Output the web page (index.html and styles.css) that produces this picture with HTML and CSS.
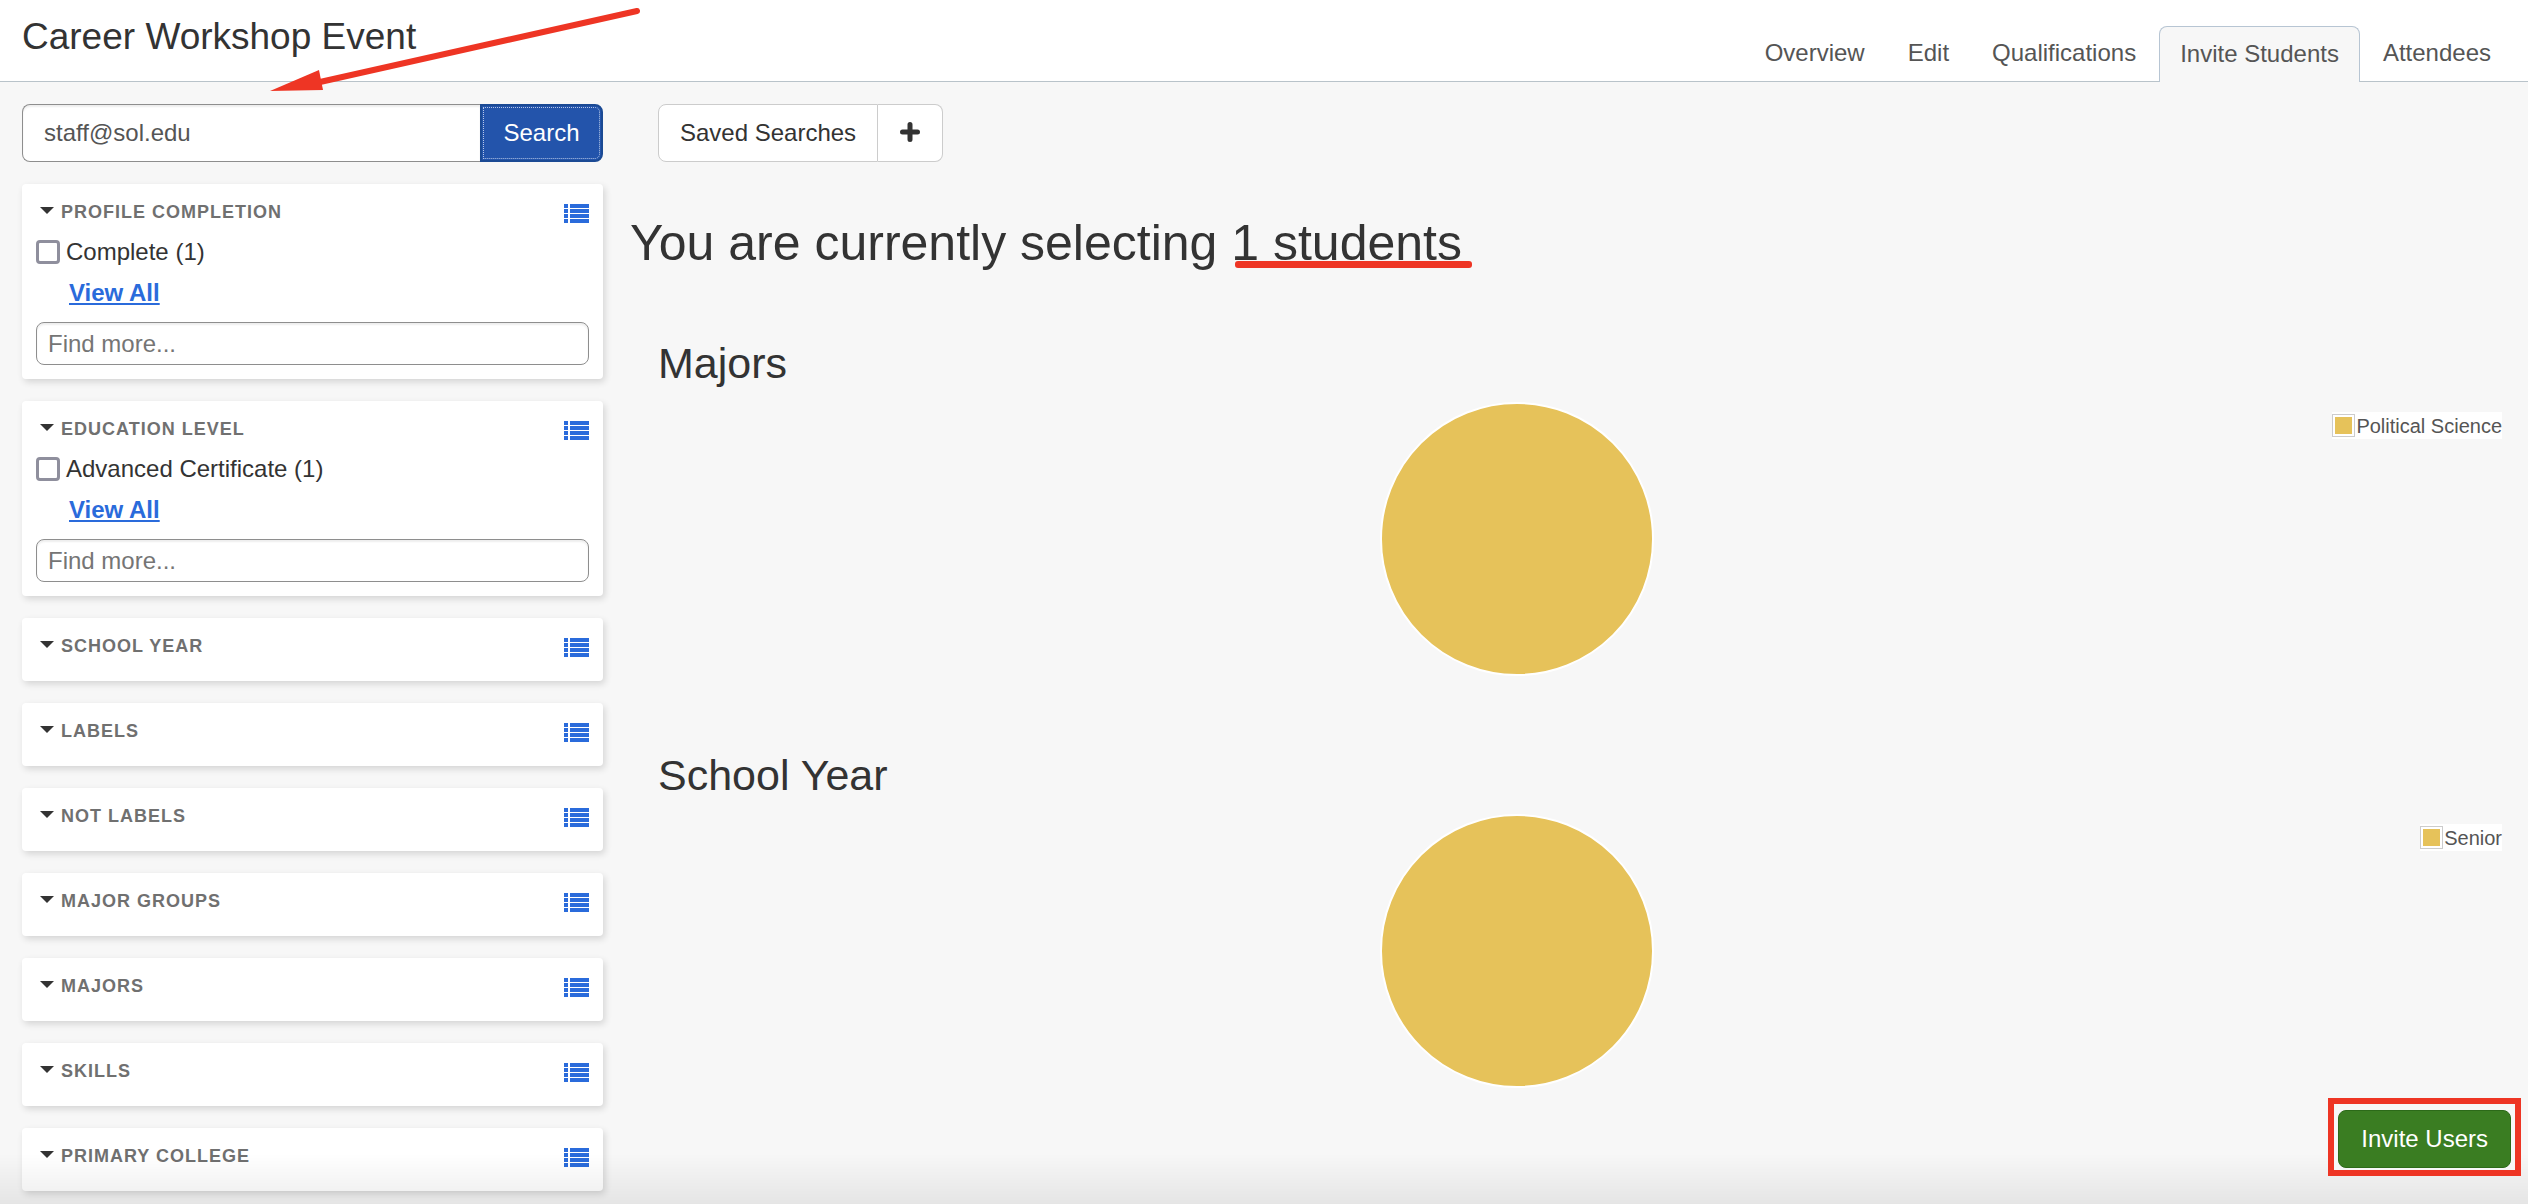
FILE: index.html
```html
<!DOCTYPE html>
<html lang="en">
<head>
<meta charset="utf-8">
<title>Career Workshop Event</title>
<link rel="stylesheet" href="styles.css">
</head>
<body>
<svg class="defs" width="0" height="0" aria-hidden="true">
  <symbol id="icon-list" viewBox="0 0 25 19">
    <path d="M0 0h4v4H0zM6 0h19v4H6zM0 5h4v4H0zM6 5h19v4H6zM0 10h4v4H0zM6 10h19v4H6zM0 15h4v4H0zM6 15h19v4H6z"/>
  </symbol>
  <symbol id="icon-caret" viewBox="0 0 14 7"><path d="M0 0h14L7 7z"/></symbol>
</svg>

<header class="page-header">
  <h1 class="page-title">Career Workshop Event</h1>
  <nav class="tabs">
    <a class="tab" href="#">Overview</a>
    <a class="tab" href="#">Edit</a>
    <a class="tab" href="#">Qualifications</a>
    <a class="tab tab-active" href="#" aria-current="page">Invite Students</a>
    <a class="tab" href="#">Attendees</a>
  </nav>
</header>

<div class="layout">
  <aside class="sidebar">
    <form class="search">
      <input class="search-input" type="text" value="staff@sol.edu" aria-label="Search students">
      <button class="search-button" type="button">Search</button>
    </form>

    <section class="card">
      <div class="card-head">
        <h2 class="card-title"><svg class="caret"><use href="#icon-caret"/></svg>Profile Completion</h2>
        <button class="list-button" type="button" aria-label="List profile completion"><svg class="list-icon"><use href="#icon-list"/></svg></button>
      </div>
      <div class="card-body">
        <label class="option"><input class="check" type="checkbox">Complete (1)</label>
        <a class="view-all" href="#">View All</a>
        <input class="find" type="text" placeholder="Find more..." aria-label="Find more profile completion">
      </div>
    </section>

    <section class="card">
      <div class="card-head">
        <h2 class="card-title"><svg class="caret"><use href="#icon-caret"/></svg>Education Level</h2>
        <button class="list-button" type="button" aria-label="List education levels"><svg class="list-icon"><use href="#icon-list"/></svg></button>
      </div>
      <div class="card-body">
        <label class="option"><input class="check" type="checkbox">Advanced Certificate (1)</label>
        <a class="view-all" href="#">View All</a>
        <input class="find" type="text" placeholder="Find more..." aria-label="Find more education levels">
      </div>
    </section>

    <section class="card">
      <div class="card-head">
        <h2 class="card-title"><svg class="caret"><use href="#icon-caret"/></svg>School Year</h2>
        <button class="list-button" type="button" aria-label="List school years"><svg class="list-icon"><use href="#icon-list"/></svg></button>
      </div>
    </section>
    <section class="card">
      <div class="card-head">
        <h2 class="card-title"><svg class="caret"><use href="#icon-caret"/></svg>Labels</h2>
        <button class="list-button" type="button" aria-label="List labels"><svg class="list-icon"><use href="#icon-list"/></svg></button>
      </div>
    </section>
    <section class="card">
      <div class="card-head">
        <h2 class="card-title"><svg class="caret"><use href="#icon-caret"/></svg>Not Labels</h2>
        <button class="list-button" type="button" aria-label="List not labels"><svg class="list-icon"><use href="#icon-list"/></svg></button>
      </div>
    </section>
    <section class="card">
      <div class="card-head">
        <h2 class="card-title"><svg class="caret"><use href="#icon-caret"/></svg>Major Groups</h2>
        <button class="list-button" type="button" aria-label="List major groups"><svg class="list-icon"><use href="#icon-list"/></svg></button>
      </div>
    </section>
    <section class="card">
      <div class="card-head">
        <h2 class="card-title"><svg class="caret"><use href="#icon-caret"/></svg>Majors</h2>
        <button class="list-button" type="button" aria-label="List majors"><svg class="list-icon"><use href="#icon-list"/></svg></button>
      </div>
    </section>
    <section class="card">
      <div class="card-head">
        <h2 class="card-title"><svg class="caret"><use href="#icon-caret"/></svg>Skills</h2>
        <button class="list-button" type="button" aria-label="List skills"><svg class="list-icon"><use href="#icon-list"/></svg></button>
      </div>
    </section>
    <section class="card">
      <div class="card-head">
        <h2 class="card-title"><svg class="caret"><use href="#icon-caret"/></svg>Primary College</h2>
        <button class="list-button" type="button" aria-label="List primary colleges"><svg class="list-icon"><use href="#icon-list"/></svg></button>
      </div>
    </section>
  </aside>

  <main class="content">
    <div class="saved">
      <button class="saved-button" type="button">Saved Searches</button>
      <button class="saved-button saved-add" type="button" aria-label="Save this search">
        <svg width="20" height="20" viewBox="0 0 20 20"><path d="M10 2.500v15M2.500 10h15" stroke="#333" stroke-width="5" stroke-linecap="round"/></svg>
      </button>
    </div>
    <h2 class="selection">You are currently selecting <span class="marked">1 students</span></h2>

    <section class="chart">
      <h3 class="chart-title">Majors</h3>
      <div class="chart-area">
        <svg class="pie" viewBox="0 0 276 276"><circle cx="138" cy="138" r="137" fill="#e6c25a" stroke="#fff" stroke-width="2"/></svg>
        <div class="legend"><span class="swatch"></span>Political Science</div>
      </div>
    </section>
    <section class="chart">
      <h3 class="chart-title">School Year</h3>
      <div class="chart-area">
        <svg class="pie" viewBox="0 0 276 276"><circle cx="138" cy="138" r="137" fill="#e6c25a" stroke="#fff" stroke-width="2"/></svg>
        <div class="legend"><span class="swatch"></span>Senior</div>
      </div>
    </section>
  </main>
</div>

<div class="fade"></div>
<div class="invite-frame"><button class="invite" type="button">Invite Users</button></div>
<svg class="arrow" width="372" height="84" viewBox="0 0 372 84" aria-hidden="true">
  <path d="M367 4L50 75" stroke="#ee3524" stroke-width="6" stroke-linecap="round"/>
  <path d="M0 84L49 63L53 83z" fill="#ee3524"/>
</svg>
</body>
</html>
```
FILE: styles.css
```css
* { box-sizing: border-box; }

body {
  margin: 0;
  min-height: 100vh;
  background: #f7f7f7;
  color: #333;
  font-family: "Liberation Sans", Arial, sans-serif;
  font-size: 24px;
  line-height: 28px;
}

h1, h2, h3 { margin: 0; font-weight: 400; }
button, input { font: inherit; color: inherit; margin: 0; }
button { cursor: pointer; }
.defs { display: block; }

.page-header {
  display: flex;
  justify-content: space-between;
  align-items: flex-start;
  height: 82px;
  padding: 0 17px 0 22px;
  background: #fff;
  border-bottom: 1px solid #b9c3ca;
}
.page-title { padding-top: 16px; font-size: 37px; line-height: 42px; }

.tabs { display: flex; gap: 3px; padding-top: 26px; }
.tab {
  height: 56px;
  padding: 13px 20px 0;
  color: #555;
  text-decoration: none;
}
.tab-active {
  background: #f7f7f7;
  border: 1px solid #b7c5d3;
  border-bottom: 0;
  border-radius: 8px 8px 0 0;
}

.layout { display: flex; }
.sidebar {
  display: flex;
  flex-direction: column;
  gap: 22px;
  width: 25%;
  padding: 22px 29px 13px 22px;
}

.search { display: flex; height: 58px; }
.search-input {
  flex: 1;
  min-width: 0;
  padding: 0 21px;
  border: 1px solid #8e8e8e;
  border-right: 0;
  border-radius: 8px 0 0 8px;
  background: #fff;
  box-shadow: inset 0 2px 2px rgba(0, 0, 0, .07);
  color: #555;
}
.search-button {
  width: 123px;
  padding: 0;
  border: 2px solid #1b4a94;
  border-radius: 0 8px 8px 0;
  background: #2354ab;
  color: #fff;
  outline: 1px dotted #b5c6e6;
  outline-offset: -4px;
}

.card {
  min-height: 63px;
  padding: 14px;
  border-radius: 4px;
  background: #fff;
  box-shadow: 2px 3px 7px rgba(0, 0, 0, .14);
}
.card-head { display: flex; justify-content: space-between; align-items: center; height: 28px; }
.card-title {
  display: flex;
  align-items: center;
  gap: 7px;
  padding-left: 4px;
  color: #707070;
  font-size: 18px;
  font-weight: 700;
  letter-spacing: 1px;
  text-transform: uppercase;
}
.caret { width: 14px; height: 7px; margin-bottom: 3px; fill: #333; }
.list-button { display: flex; padding: 3px 0 0; border: 0; background: none; }
.list-icon { width: 25px; height: 19px; fill: #2a6bdb; }

.card-body { display: flex; flex-direction: column; padding-top: 8px; }
.option { display: flex; align-items: center; gap: 6px; height: 36px; }
.check {
  appearance: none;
  width: 24px;
  height: 24px;
  border: 3px solid #8f8f9d;
  border-radius: 4px;
  background: #fff;
}
.view-all {
  align-self: flex-start;
  margin-left: 33px;
  color: #2a6bdb;
  font-weight: 700;
  line-height: 46px;
  text-decoration-thickness: 2px;
  text-underline-offset: 2px;
}
.find {
  width: 100%;
  height: 43px;
  margin-top: 6px;
  padding: 0 11px;
  border: 1px solid #8e8e8e;
  border-radius: 8px;
  background: #fff;
  box-shadow: inset 0 2px 2px rgba(0, 0, 0, .07);
}
.find::placeholder { color: #757575; opacity: 1; }

.content { flex: 1; padding: 22px 26px 0; }
.saved { display: flex; height: 58px; }
.saved-button {
  padding: 0 21px;
  border: 1px solid #ccc;
  border-radius: 8px 0 0 8px;
  background: #fff;
}
.saved-add {
  display: flex;
  align-items: center;
  justify-content: center;
  width: 65px;
  padding: 0 0 2px;
  border-left: 0;
  border-radius: 0 8px 8px 0;
}
.selection { margin: 51px 0 0 -28px; font-size: 50px; line-height: 60px; }
.marked { position: relative; }
.marked::after {
  content: "";
  position: absolute;
  left: 4px;
  right: -10px;
  bottom: 3px;
  height: 7px;
  border-radius: 3px;
  background: #ee3524;
}

.chart { padding-top: 66px; }
.chart + .chart { padding-top: 73px; }
.chart-title { font-size: 43px; line-height: 48px; }
.chart-area { display: grid; padding-top: 15px; }
.pie { grid-area: 1 / 1; justify-self: center; width: 274px; height: 274px; margin: 0 127px 2px 0; }
.legend {
  grid-area: 1 / 1;
  display: flex;
  align-items: center;
  align-self: start;
  justify-self: end;
  gap: 1px;
  height: 27px;
  margin-top: 10px;
  background: #fff;
  color: #555;
  font-size: 20px;
}
.swatch { width: 23px; height: 23px; padding: 2px; border: 1px solid #ccc; background: #e6c25a content-box; }

.fade {
  position: fixed;
  left: 0;
  right: 0;
  bottom: 0;
  height: 50px;
  background: linear-gradient(rgba(0, 0, 0, 0), rgba(0, 0, 0, .07));
  pointer-events: none;
}
.invite-frame {
  position: fixed;
  right: 7px;
  bottom: 28px;
  padding: 6px 4px 2px;
  border: 6px solid #ee3524;
  background: #f7f7f7;
}
.invite {
  display: block;
  height: 58px;
  padding: 0 22px;
  border: 1px solid #2c6a19;
  border-radius: 8px;
  background: #3a7d22;
  color: #fff;
}
.arrow { position: absolute; left: 270px; top: 7px; fill: none; pointer-events: none; }
```
